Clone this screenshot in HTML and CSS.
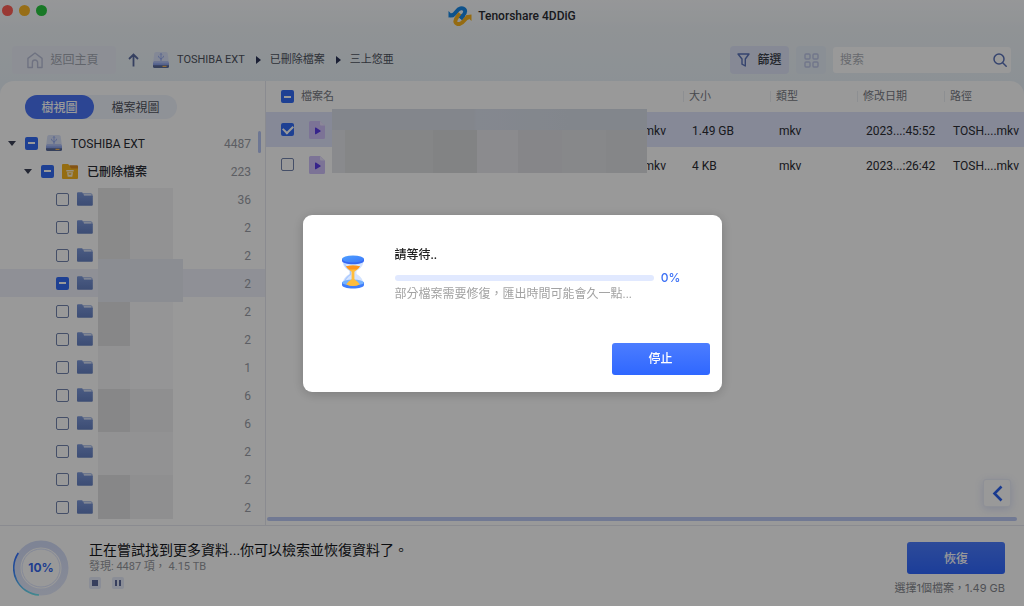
FILE: index.html
```html
<!DOCTYPE html>
<html lang="zh-Hant">
<head>
<meta charset="utf-8">
<title>Tenorshare 4DDiG</title>
<link rel="stylesheet" href="styles.css">
</head>
<body>
<svg width="0" height="0" class="defs" aria-hidden="true">
  <defs>
    <linearGradient id="gFolder" x1="0" y1="0" x2="0" y2="1"><stop offset="0" stop-color="#7c98da"/><stop offset="1" stop-color="#6580c2"/></linearGradient>
    <linearGradient id="gDrive" x1="0" y1="0" x2="0" y2="1"><stop offset="0" stop-color="#a5b8f5"/><stop offset="1" stop-color="#5f7dd8"/></linearGradient>
    <linearGradient id="gRing" x1="0" y1="0" x2="0" y2="1"><stop offset="0" stop-color="#3370ff"/><stop offset=".5" stop-color="#3f8cff"/><stop offset="1" stop-color="#6fe3ee"/></linearGradient>
    <linearGradient id="gCap" x1="0" y1="0" x2="1" y2="1"><stop offset="0" stop-color="#4fa0ff"/><stop offset="1" stop-color="#3b78fa"/></linearGradient>
    <linearGradient id="gGlow" x1="0" y1="0" x2="0" y2="1"><stop offset="0" stop-color="#d3dcf8"/><stop offset="1" stop-color="#e3e9fc"/></linearGradient>
  </defs>
  <symbol id="folder" viewBox="0 0 16 14"><path d="M6 1.800h8a1 1 0 0 1 1 1V5H6z" fill="#f4f7ff" stroke="#7c98da" stroke-width=".8"/><path d="M0 1.200A1 1 0 0 1 1 .2h4.200l1.800 3.400H15a1 1 0 0 1 .8 1V12.700a1 1 0 0 1-1 1H1a1 1 0 0 1-1-1z" fill="url(#gFolder)"/></symbol>
  <symbol id="drive" viewBox="0 0 16 16"><path d="M3 0h10a1.800 1.800 0 0 1 1.700 1.500L16 11H0L1.300 1.500A1.800 1.800 0 0 1 3 0z" fill="#dbe3fb"/><path d="M1 9h14l1 2H0z" fill="#b4c4f5"/><path d="M0 10.500h16v3.800A1.700 1.700 0 0 1 14.300 16H1.700A1.700 1.700 0 0 1 0 14.300z" fill="url(#gDrive)"/><path d="M0 13.200h16v1.100A1.700 1.700 0 0 1 14.300 16H1.700A1.700 1.700 0 0 1 0 14.300z" fill="#5b6b98"/><rect x="9.500" y="13.800" width="4" height="1.200" fill="#f3b45b"/><path d="M8 1.800v6M5.600 3.800v1.400L8 6.800l2.400-1.600V3.800M7.100 2.600l.9-1.200.9 1.200" fill="none" stroke="#8ba2ec" stroke-width=".8"/><circle cx="8" cy="8" r=".8" fill="#8ba2ec"/></symbol>
  <symbol id="video" viewBox="0 0 16 18"><path d="M1.500 0H11l5 4.500v12a1.500 1.500 0 0 1-1.500 1.500h-13A1.500 1.500 0 0 1 0 16.500v-15A1.500 1.500 0 0 1 1.500 0z" fill="#cfc0fa"/><path d="M11 0l5 4.500h-4a1 1 0 0 1-1-1z" fill="#e9e3fe"/><path d="M6 7.100a.6.6 0 0 1 .9-.5l4.500 2.800a.6.6 0 0 1 0 1l-4.500 2.800a.6.6 0 0 1-.9-.5z" fill="#5a3be8"/></symbol>
</svg>

<header class="titlebar">
  <div class="lights"><span class="light red"></span><span class="light amber"></span><span class="light green"></span></div>
  <svg class="logo" viewBox="0 0 24 20" aria-hidden="true"><path d="M.5 5v6.500L6.500 11z" fill="#1889e8"/><path d="M2.500 9.200C5.500 10 7 7.500 8.600 5.400C10.800 2.400 14.300 1 16.400 3.400C18.200 5.500 16.500 8 14.700 10L12.500 12.700" fill="none" stroke="#1889e8" stroke-width="4"/><path d="M23.500 8.600v6.500L17.500 9.200z" fill="#f8b31f"/><path d="M21.500 11.300C19 11 17.500 12.500 15.800 14.900C13.600 17.900 10 19.200 8 17C6.200 14.900 8 12.500 9.600 10.500L12 7.500" fill="none" stroke="#f8b31f" stroke-width="4"/><path d="M12.500 12.700l3-3.700" stroke="#1889e8" stroke-width="4"/></svg>
  <h1 class="app-name">Tenorshare 4DDiG</h1>
</header>

<nav class="toolbar" aria-label="工具列">
  <button class="home" type="button"><svg width="16" height="17" viewBox="0 0 17 18" fill="none" stroke="#b9bfd8" stroke-width="1.500" stroke-linejoin="round" aria-hidden="true"><path d="M1 6.800L8.500 1 16 6.800V16.500H11.300V11.300a2.800 2.800 0 0 0-5.600 0v5.200H1z"/></svg>返回主頁</button>
  <button class="up" type="button" aria-label="上一層"><svg width="11" height="14" viewBox="0 0 11 14" fill="none" stroke="#5a6ca0" stroke-width="1.800" aria-hidden="true"><path d="M5.500 13.500V1.500M1 6l4.500-4.500L10 6"/></svg></button>
  <svg class="crumb-icon" width="16" height="16"><use href="#drive"/></svg>
  <ol class="crumbs"><li><a href="#">TOSHIBA EXT</a></li><li><a href="#">已刪除檔案</a></li><li><a href="#">三上悠亜</a></li></ol>
  <button class="filter" type="button"><svg width="13" height="14" viewBox="0 0 13 14" fill="none" stroke="#5a72b8" stroke-width="1.400" stroke-linejoin="round" aria-hidden="true"><path d="M1 1h11L8.300 6v7L5 11.200V6z"/></svg>篩選</button>
  <button class="grid-btn" type="button" aria-label="格狀檢視"><svg width="15" height="15" viewBox="0 0 15 15" fill="none" stroke="#bcc5e6" stroke-width="1.400" aria-hidden="true"><rect x="1" y="1" width="5" height="5" rx="1"/><rect x="9" y="1" width="5" height="5" rx="1"/><rect x="1" y="9" width="5" height="5" rx="1"/><rect x="9" y="9" width="5" height="5" rx="1"/></svg></button>
  <label class="search"><input type="text" placeholder="搜索" aria-label="搜索"><svg width="14" height="14" viewBox="0 0 14 14" fill="none" stroke="#5a72b8" stroke-width="1.500" stroke-linecap="round" aria-hidden="true"><circle cx="6" cy="6" r="5"/><path d="M9.700 9.700l3.500 3.500"/></svg></label>
</nav>

<div class="window">
  <main class="panes">
    <aside class="sidebar">
      <div class="tabs"><button class="tab active" type="button">樹視圖</button><button class="tab" type="button">檔案視圖</button></div>
      <div class="tree-wrap">
        <ul class="tree">
          <li class="node root"><span class="caret"></span><input class="check mixed" type="checkbox" aria-label="TOSHIBA EXT"><svg width="16" height="16"><use href="#drive"/></svg><span class="label">TOSHIBA EXT</span><span class="count">4487</span></li>
          <li class="node branch"><span class="caret"></span><input class="check mixed" type="checkbox" aria-label="已刪除檔案"><svg width="16" height="15" viewBox="0 0 16 15" aria-hidden="true"><path d="M1 0h5l2 2h7a1 1 0 0 1 1 1v3H0V1a1 1 0 0 1 1-1z" fill="#f9b61d"/><path d="M7.500 1.200H15a1 1 0 0 1 1 1V5H9z" fill="#dd8a20"/><path d="M0 3.500h8l1.500 1H16V14a1 1 0 0 1-1 1H1a1 1 0 0 1-1-1z" fill="#f9b61d"/><path d="M4.300 6h7.400v1.500H4.300zM5 8.200h6l-.7 4.600H5.700z" fill="#fff3d6"/><path d="M6.500 9.200h3l-.3 1.500H6.800z" fill="#f9b61d"/></svg><span class="label folder-name">已刪除檔案</span><span class="count">223</span></li>
          <li class="node leaf"><input class="check" type="checkbox" aria-label="資料夾 1"><svg width="16" height="14"><use href="#folder"/></svg><span class="count">36</span></li>
          <li class="node leaf"><input class="check" type="checkbox" aria-label="資料夾 2"><svg width="16" height="14"><use href="#folder"/></svg><span class="count">2</span></li>
          <li class="node leaf"><input class="check" type="checkbox" aria-label="資料夾 3"><svg width="16" height="14"><use href="#folder"/></svg><span class="count">2</span></li>
          <li class="node leaf selected"><input class="check mixed" type="checkbox" aria-label="資料夾 4"><svg width="16" height="14"><use href="#folder"/></svg><span class="count">2</span></li>
          <li class="node leaf"><input class="check" type="checkbox" aria-label="資料夾 5"><svg width="16" height="14"><use href="#folder"/></svg><span class="count">2</span></li>
          <li class="node leaf"><input class="check" type="checkbox" aria-label="資料夾 6"><svg width="16" height="14"><use href="#folder"/></svg><span class="count">2</span></li>
          <li class="node leaf"><input class="check" type="checkbox" aria-label="資料夾 7"><svg width="16" height="14"><use href="#folder"/></svg><span class="count">1</span></li>
          <li class="node leaf"><input class="check" type="checkbox" aria-label="資料夾 8"><svg width="16" height="14"><use href="#folder"/></svg><span class="count">6</span></li>
          <li class="node leaf"><input class="check" type="checkbox" aria-label="資料夾 9"><svg width="16" height="14"><use href="#folder"/></svg><span class="count">6</span></li>
          <li class="node leaf"><input class="check" type="checkbox" aria-label="資料夾 10"><svg width="16" height="14"><use href="#folder"/></svg><span class="count">2</span></li>
          <li class="node leaf"><input class="check" type="checkbox" aria-label="資料夾 11"><svg width="16" height="14"><use href="#folder"/></svg><span class="count">2</span></li>
          <li class="node leaf"><input class="check" type="checkbox" aria-label="資料夾 12"><svg width="16" height="14"><use href="#folder"/></svg><span class="count">2</span></li>
        </ul>
        <div class="tree-mask" aria-hidden="true">
          <i class="m3"></i><i class="m1"></i><i class="sel"></i><i class="m4"></i><i class="m0"></i><i class="m1"></i><i class="m0"></i><i class="m4"></i><i class="m2"></i><i class="m1"></i><i class="m1"></i><i class="m4"></i><i class="m2"></i>
        </div>
        <span class="tree-scroll" aria-hidden="true"></span>
      </div>
    </aside>

    <section class="files">
      <div class="table-wrap">
        <table class="table">
          <colgroup><col><col class="c-mid"><col class="c-mid"><col class="c-mid"><col class="c-path"></colgroup>
          <thead><tr><th scope="col"><span class="name"><input class="check mixed" type="checkbox" aria-label="全選">檔案名</span></th><th scope="col">大小</th><th scope="col">類型</th><th scope="col">修改日期</th><th scope="col">路徑</th></tr></thead>
          <tbody>
            <tr class="selected"><td><span class="name"><input class="check" type="checkbox" checked aria-label="檔案 1"><svg width="16" height="18"><use href="#video"/></svg><span class="ext">mkv</span></span></td><td>1.49 GB</td><td>mkv</td><td>2023...:45:52</td><td>TOSH....mkv</td></tr>
            <tr><td><span class="name"><input class="check" type="checkbox" aria-label="檔案 2"><svg width="16" height="18"><use href="#video"/></svg><span class="ext">mkv</span></span></td><td>4 KB</td><td>mkv</td><td>2023...:26:42</td><td>TOSH....mkv</td></tr>
          </tbody>
        </table>
        <div class="name-mask" aria-hidden="true"></div>
      </div>
      <button class="back" type="button" aria-label="展開"><svg width="11" height="17" viewBox="0 0 11 17" fill="none" stroke="#2b62ee" stroke-width="2.600" aria-hidden="true"><path d="M9.500 1.500l-7 7 7 7"/></svg></button>
      <div class="h-scroll" aria-hidden="true"></div>
    </section>
  </main>

  <footer class="footer">
    <div class="ring"><svg width="56" height="56" viewBox="0 0 56 56" aria-hidden="true"><circle cx="28" cy="28" r="24" fill="none" stroke="url(#gGlow)" stroke-width="7"/><circle cx="28" cy="28" r="19" fill="#fff" stroke="#dde5fd" stroke-width="1"/><path d="M5.300 13A27 27 0 0 0 26 55" fill="none" stroke="url(#gRing)" stroke-width="1.600"/></svg><span>10%</span></div>
    <div class="status">
      <p class="headline">正在嘗試找到更多資料...你可以檢索並恢復資料了。</p>
      <p class="found">發現: 4487 項， 4.15 TB</p>
      <div class="controls"><button type="button" aria-label="停止掃描"><i class="stop"></i></button><button type="button" aria-label="暫停掃描"><i class="pause"></i></button></div>
    </div>
    <div class="recover"><button class="primary" type="button">恢復</button><p>選擇1個檔案，1.49 GB</p></div>
  </footer>
</div>

<div class="overlay">
  <div class="dialog" role="dialog" aria-modal="true" aria-labelledby="wait-title">
    <svg class="hourglass" width="24" height="34" viewBox="0 0 24 34" aria-hidden="true"><path d="M1.500 5h21c0 6-3 8.500-7 11v3c4.500 2.500 7 6 7 11h-21c0-5 2.500-8.500 7-11v-3C4.500 13.500 1.500 11 1.500 5z" fill="#d3e3ff"/><path d="M3.500 8.500c.5 3 2.500 4.500 6 7v4c-3.500 2.500-5.500 4.500-6 7.500" fill="none" stroke="#a9c8ff" stroke-width="1.200"/><path d="M1 27v3c0 2.200 5 3.500 11 3.500S23 32.200 23 30v-3z" fill="#3f7dfb"/><ellipse cx="12" cy="27.500" rx="11" ry="3" fill="#76b2ff"/><path d="M5 11.200q7-1.500 14 0-1.500 3-5.600 5.600v7.400q4 2.500 5.300 5.300-6.700 3-13.400 0 1.300-2.800 5.300-5.300v-7.400Q6.500 14.200 5 11.200z" fill="#ffbd3c"/><path d="M5 11.200q7-1.500 14 0-.8 1.900-3.400 3.400H8.400Q5.800 13.100 5 11.200z" fill="#ff951f"/><path d="M1 3.800v2c0 2.300 5 3.500 11 3.500s11-1.200 11-3.500v-2z" fill="#3568f4"/><ellipse cx="12" cy="4" rx="11" ry="3.500" fill="url(#gCap)"/></svg>
    <div class="dialog-body">
      <h2 id="wait-title">請等待..</h2>
      <div class="progress-row"><progress value="0" max="100" aria-label="匯出進度"></progress><span>0%</span></div>
      <p>部分檔案需要修復，匯出時間可能會久一點...</p>
    </div>
    <button class="primary stop-btn" type="button">停止</button>
  </div>
</div>
</body>
</html>
```

FILE: styles.css
```css
* { box-sizing: border-box; }

body {
  margin: 0;
  min-height: 100vh;
  display: flex;
  flex-direction: column;
  font: 12px/16px Roboto, "Noto Sans CJK TC", sans-serif;
  color: #2a2c33;
  background: linear-gradient(#fafcfe 0, #f0f5f9 30px, #eaf2f9 81px);
}

button, input { font: inherit; color: inherit; }
button {
  border: 0;
  padding: 0;
  background: none;
  display: flex;
  align-items: center;
  justify-content: center;
}
h1, h2, p, ul, ol { margin: 0; padding: 0; list-style: none; font-weight: 400; }
svg { flex: none; display: block; }
.defs { position: absolute; }

/* Title bar */
.titlebar {
  display: flex;
  align-items: center;
  justify-content: center;
  gap: 6px;
  height: 31px;
  position: relative;
}
.lights { position: absolute; left: 2px; top: 5px; display: flex; gap: 6px; }
.light { width: 11px; height: 11px; border-radius: 50%; }
.red { background: #ff5f57; }
.amber { background: #fcb827; }
.green { background: #28c840; }
.logo { width: 24px; height: 20px; }
.app-name { font-size: 12px; font-weight: 500; }

/* Toolbar */
.toolbar {
  display: flex;
  align-items: center;
  height: 50px;
  padding: 8px 13px 0 12px;
  font-size: 11px;
}
.home {
  width: 104px;
  height: 28px;
  gap: 7px;
  padding-right: 2px;
  border-radius: 4px;
  background: #ebeff8;
  color: #a3a8b3;
  font-size: 12px;
}
.up { margin: 0 14px 0 12px; }
.crumb-icon { margin-right: 8px; }
.crumbs { display: flex; flex: 1; }
.crumbs li { display: flex; align-items: center; }
.crumbs li + li::before {
  content: "";
  margin: 0 9px 0 11px;
  border: solid transparent;
  border-width: 4px 0 4px 5px;
  border-left-color: #2c3557;
}
.crumbs a { color: #4d525e; text-decoration: none; }
.filter {
  width: 59px;
  height: 28px;
  gap: 7px;
  border-radius: 4px;
  background: #dfe5f8;
  color: #3a3e49;
  font-size: 12px;
  font-weight: 500;
}
.grid-btn {
  width: 30px;
  height: 28px;
  margin: 0 7px;
  border-radius: 4px;
  background: #e7eef8;
}
.search {
  display: flex;
  align-items: center;
  width: 178px;
  height: 26px;
  padding: 0 4px 0 7px;
  border-radius: 3px;
  background: #fff;
}
.search input { flex: 1; min-width: 0; padding: 0; border: 0; outline: 0; background: none; font-size: 12px; }
.search input::placeholder { color: #aeb1b8; }

/* Main window */
.window {
  flex: 1;
  display: flex;
  flex-direction: column;
  border-radius: 14px 14px 0 0;
  background: #fff;
}
.panes { flex: 1; display: flex; }
.sidebar { width: 266px; padding-top: 14px; border-right: 1px solid #e6e8f0; }
.tabs {
  display: inline-flex;
  margin-left: 25px;
  border-radius: 12px;
  background: #eff3fc;
  vertical-align: top;
}
.tab { width: 83px; height: 24px; padding-top: 1px; border-radius: 12px; color: #50545e; }
.tab.active { width: 69px; background: #4a74f6; color: #fff; font-weight: 500; }

.check {
  appearance: none;
  flex: none;
  width: 13px;
  height: 13px;
  margin: 0;
  border: 1px solid #7384ad;
  border-radius: 2px;
}
.check.mixed, .check:checked { border: 0; background-color: #326bf5; display: grid; place-items: center; }
.check.mixed::after { content: ""; width: 7px; height: 2px; background: #fff; }
.check:checked::after {
  content: "";
  width: 8px;
  height: 5px;
  margin-bottom: 2px;
  border: solid #fff;
  border-width: 0 0 2px 2px;
  transform: rotate(-45deg);
}

/* Tree */
.tree-wrap { position: relative; margin-top: 10px; }
.node { display: flex; align-items: center; height: 28px; padding-right: 14px; }
.root { padding-left: 8px; }
.branch { padding-left: 24px; }
.leaf { padding-left: 56px; }
.node.selected { background: #eef1fb; }
.caret {
  border: solid transparent;
  border-width: 5px 4px 0;
  border-top-color: #3c4257;
  margin-right: 9px;
}
.node svg { margin: 0 9px 0 8px; }
.label { padding-top: 1px; }
.folder-name { font-weight: 500; }
.count { margin-left: auto; padding-top: 1px; color: #9a9da6; }
.tree-mask {
  position: absolute;
  left: 98px;
  top: 59px;
  display: grid;
  grid-template-columns: 32px 43px 10px;
  grid-template-rows: 71px 43px 44px 43px 43px 43px 44px;
}
.tree-mask i:nth-child(n + 4):nth-child(even), .tree-mask i:first-child { grid-column: 1; }
.tree-mask i.sel { grid-column: 1 / -1; background: #e8ecf4; }
.m0 { background: #f9f9fa; }
.m1 { background: #f4f4f5; }
.m2 { background: #efeff0; }
.m3 { background: #e6e6e7; }
.m4 { background: #e2e2e3; }
.tree-scroll {
  position: absolute;
  right: 4px;
  top: 2px;
  width: 3px;
  height: 22px;
  border-radius: 2px;
  background: #b7c6f6;
}

/* File table */
.files { flex: 1; min-width: 0; display: flex; flex-direction: column; }
.table-wrap { position: relative; }
.table { width: 100%; table-layout: fixed; border-collapse: collapse; }
.c-mid { width: 87px; }
.c-path { width: 80px; }
.table th {
  height: 31px;
  padding: 0 0 0 6px;
  text-align: left;
  font-size: 11px;
  font-weight: 400;
  color: #777a83;
  background: linear-gradient(#eceef4, #eceef4) left center / 1px 11px no-repeat;
}
.table th:first-child { background: none; }
.table td { height: 35px; padding: 2px 0 0 9px; white-space: nowrap; }
.table th:first-child, .table td:first-child { padding: 0 17px 0 15px; }
.table tr.selected { background: #dfe5fc; }
.name { display: flex; align-items: center; gap: 7px; }
.name svg { margin-left: 8px; }
.ext { margin-left: auto; padding-top: 2px; }
.name-mask {
  position: absolute;
  left: 66px;
  right: 377px;
  top: 28px;
  height: 64px;
  background:
    linear-gradient(90deg, #dae0ea 45%, #dde3ef 46%, #d9e0ea 75%, #d9dfe9) top / 100% 21px no-repeat,
    linear-gradient(90deg, #e5e6ec 0 4%, #dedfe2 4% 32%, #d9dadd 32% 46%, #e8e8ed 46% 59%, #e0e0e4 59% 73%, #e2e3e7 73% 87%, #dedfe3 87%);
}
.back {
  align-self: flex-end;
  width: 28px;
  height: 28px;
  margin: auto 13px 10px 0;
  border: 1px solid #edf0fb;
  border-radius: 3px;
  background: #fff;
  box-shadow: 0 2px 8px #4a6bd933;
}
.h-scroll { height: 4px; margin: 0 7px 4px 1px; border-radius: 2px; background: #bccaf6; }

/* Footer */
.footer {
  display: flex;
  align-items: flex-start;
  min-height: 81px;
  padding: 14px 19px 10px 13px;
  border-top: 1px solid #e6e8f0;
}
.ring { display: grid; place-items: center; font-family: Inter, sans-serif; font-weight: 700; color: #3468ef; }
.ring > * { grid-area: 1 / 1; }
.status { flex: 1; margin-left: 20px; }
.headline { font-size: 14px; line-height: 20px; color: #15171c; }
.found { font-size: 11px; line-height: 14px; color: #95979d; }
.controls { display: flex; gap: 11px; margin-top: 3px; }
.controls button { width: 12px; height: 12px; border-radius: 2px; background: #e6ebfa; }
.stop { width: 6px; height: 6px; background: #5d6a9c; }
.pause { width: 6px; height: 6px; border: solid #5d6a9c; border-width: 0 2px; }
.recover {
  display: flex;
  flex-direction: column;
  align-items: flex-end;
  gap: 6px;
  padding-top: 2px;
  font: 11px/16px Inter, "Noto Sans CJK TC", sans-serif;
  color: #85878e;
}

.primary {
  width: 98px;
  height: 32px;
  padding-top: 1px;
  border-radius: 3px;
  background: linear-gradient(#4c7dff, #2f67ff);
  color: #fff;
  font-size: 12px;
  font-weight: 500;
}

/* Modal */
.overlay {
  position: fixed;
  inset: 0;
  display: flex;
  align-items: center;
  justify-content: center;
  background: rgba(0, 0, 0, .4);
}
.dialog {
  display: grid;
  grid-template-columns: auto 1fr;
  column-gap: 30px;
  width: 419px;
  padding: 32px 12px 17px 38px;
  border-radius: 9px;
  background: #fff;
  box-shadow: 0 2px 12px #0003;
}
.hourglass { margin-top: 8px; }
.dialog-body { padding-right: 29px; }
.dialog h2 { font-size: 12px; font-weight: 500; color: #222; }
.progress-row {
  display: flex;
  align-items: center;
  gap: 7px;
  margin-top: 7px;
  color: #3b70f5;
  font-family: Inter, sans-serif;
  font-weight: 500;
}
progress { appearance: none; flex: 1; min-width: 0; height: 6px; border: 0; border-radius: 3px; overflow: hidden; background: #e1e9ff; }
progress::-webkit-progress-bar { background: #e1e9ff; }
progress::-webkit-progress-value { background: #3b70f5; }
.dialog p { color: #a3a3a3; }
.stop-btn { grid-column: 1 / -1; justify-self: end; margin-top: 41px; }
```
